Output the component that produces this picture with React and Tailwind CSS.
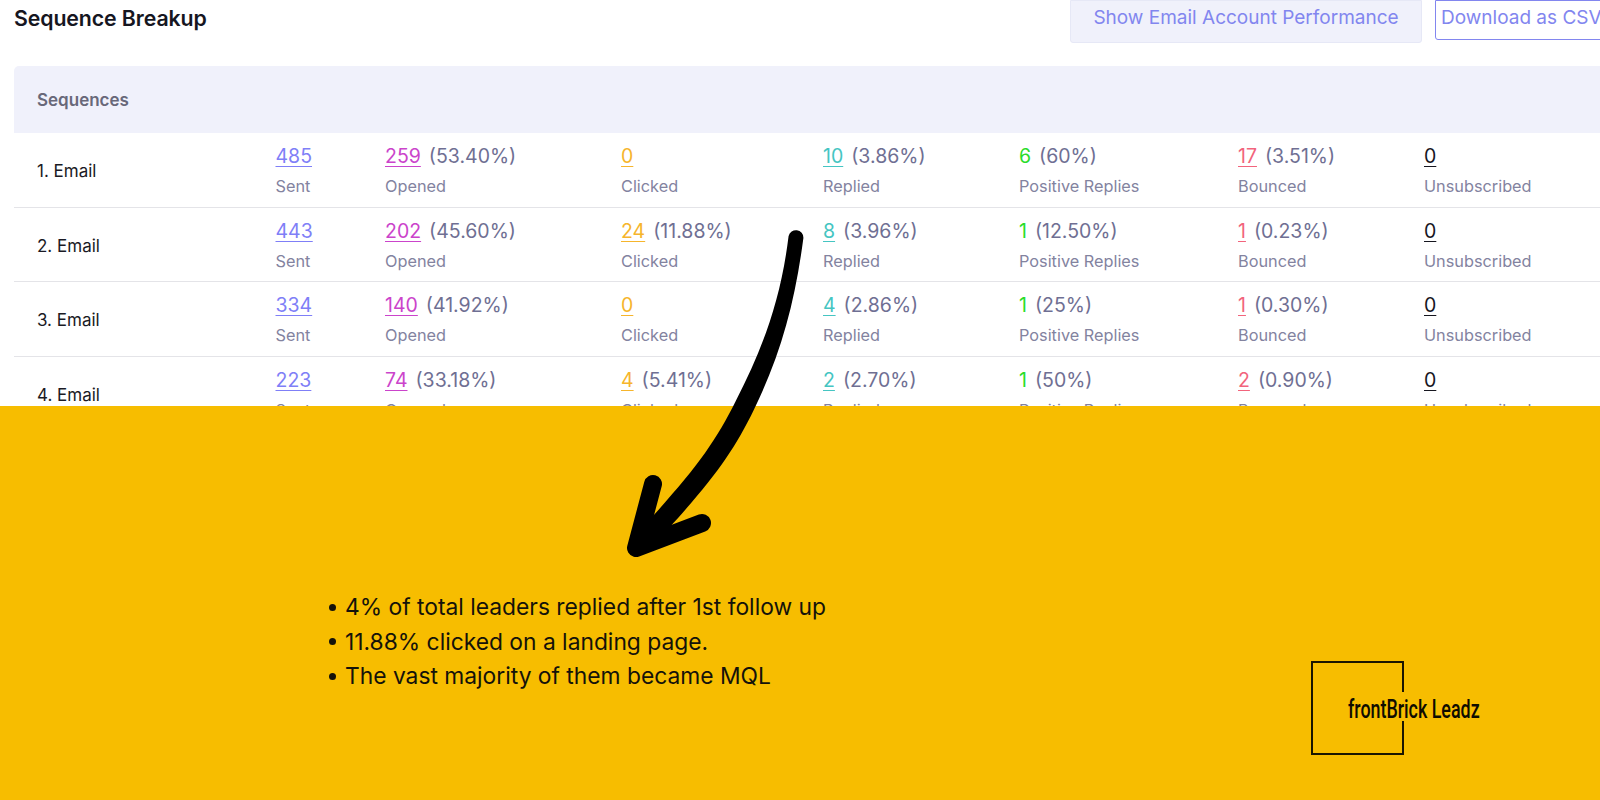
const rows = [
  { name: "1. Email", sent: "485", opened: "259", openedPct: "(53.40%)", clicked: "0", clickedPct: "", replied: "10", repliedPct: "(3.86%)", positive: "6", positivePct: "(60%)", bounced: "17", bouncedPct: "(3.51%)" },
  { name: "2. Email", sent: "443", opened: "202", openedPct: "(45.60%)", clicked: "24", clickedPct: "(11.88%)", replied: "8", repliedPct: "(3.96%)", positive: "1", positivePct: "(12.50%)", bounced: "1", bouncedPct: "(0.23%)" },
  { name: "3. Email", sent: "334", opened: "140", openedPct: "(41.92%)", clicked: "0", clickedPct: "", replied: "4", repliedPct: "(2.86%)", positive: "1", positivePct: "(25%)", bounced: "1", bouncedPct: "(0.30%)" },
  { name: "4. Email", sent: "223", opened: "74", openedPct: "(33.18%)", clicked: "4", clickedPct: "(5.41%)", replied: "2", repliedPct: "(2.70%)", positive: "1", positivePct: "(50%)", bounced: "2", bouncedPct: "(0.90%)" },
];

const bullets = [
  "4% of total leaders replied after 1st follow up",
  "11.88% clicked on a landing page.",
  "The vast majority of them became MQL",
];

const Stat = ({ value, pct, label, color, plain }) => (
  <div className="flex flex-col">
    <div className="flex items-baseline gap-[8px] text-[19.5px] leading-[30px] whitespace-nowrap">
      <span className={`${color} ${plain ? "" : "underline underline-offset-[3px] decoration-1"}`}>{value}</span>
      {pct && <span className="text-[#6f6f93]">{pct}</span>}
    </div>
    <div className="text-[16.3px] leading-[30px] text-[#83839f] whitespace-nowrap">{label}</div>
  </div>
);

export default function App() {
  return (
    <div className="relative w-[1600px] h-[800px] overflow-hidden bg-white font-['Inter','Liberation_Sans',sans-serif]">
      <div className="h-[406px] overflow-hidden">
        <div className="flex justify-between pl-[14px] h-[66px]">
          <h2 className="text-[21.3px] font-semibold leading-[37px] text-[#16161f] tracking-[-0.1px]">Sequence Breakup</h2>
          <div className="flex items-start gap-[13px] w-[530px] shrink-0">
            <button className="h-[43px] w-[352px] shrink-0 rounded-b-[3px] bg-[#f0f1fb] border border-[#e6e8f6] pb-[6px] text-[19px] text-[#8286ef] whitespace-nowrap">
              Show Email Account Performance
            </button>
            <button className="h-[40px] w-[200px] shrink-0 rounded-bl-[3px] border-[1.5px] border-[#8286ef] text-left pl-[5px] pb-[4px] text-[19px] text-[#8286ef] whitespace-nowrap">
              Download as CSV
            </button>
          </div>
        </div>
        <div className="ml-[14px]">
          <div className="h-[67px] rounded-tl-[5px] bg-[#f0f1fb] flex items-center pl-[23px] pt-[2px] text-[17px] font-semibold text-[#686879]">
            Sequences
          </div>
          {rows.map((r) => (
            <div
              key={r.name}
              className="h-[74.67px] shrink-0 grid grid-cols-[261.5px_109.5px_236px_202px_196px_219px_186px_1fr] pt-[8px] border-b-[1.5px] border-[#e4e4e8]"
            >
              <div className="pl-[23px] text-[17px] leading-[60px] text-[#1a1a24]">{r.name}</div>
              <Stat value={r.sent} label="Sent" color="text-[#7f7ff7]" />
              <Stat value={r.opened} pct={r.openedPct} label="Opened" color="text-[#cb44cb]" />
              <Stat value={r.clicked} pct={r.clickedPct} label="Clicked" color="text-[#f6b52c]" />
              <Stat value={r.replied} pct={r.repliedPct} label="Replied" color="text-[#45c5c2]" />
              <Stat value={r.positive} pct={r.positivePct} label="Positive Replies" color="text-[#2bdc2b]" plain />
              <Stat value={r.bounced} pct={r.bouncedPct} label="Bounced" color="text-[#f2647c]" />
              <Stat value="0" label="Unsubscribed" color="text-[#16161f]" />
            </div>
          ))}
        </div>
      </div>

      <div className="h-[394px] bg-[#f7bd00] flex justify-between">
        <ul className="mt-[184px] ml-[329px] flex flex-col text-[22.8px] leading-[34.5px] text-[#14120a] font-['Inter','Liberation_Sans',sans-serif] oldstyle-nums">
          {bullets.map((b) => (
            <li key={b} className="flex items-center gap-[9px] whitespace-nowrap">
              <span className="w-[7px] h-[7px] rounded-full bg-[#14120a] shrink-0" />
              {b}
            </li>
          ))}
        </ul>
        <div className="relative mt-[255px] mr-[196px] w-[93px] h-[94px] border-2 border-[#1a1500]">
          <div className="absolute left-[80px] top-[29px] h-[29px] w-[14px] bg-[#f7bd00]" />
          <span className="absolute left-[35px] top-[33px] origin-left scale-x-[0.715] text-[25px] leading-[28px] font-medium text-[#0f0c00] whitespace-nowrap font-['Roboto','Liberation_Sans',sans-serif]">
            frontBrick Leadz
          </span>
        </div>
      </div>

      <svg className="absolute left-0 top-0 pointer-events-none" width="1600" height="800" viewBox="0 0 1600 800">
        <path
          d="M788.6 236 C781 298 764 346 736 400.6 C713 447 692 474 632.7 538.2 L647.3 551.8 C708 486 731 457 754 409.4 C781 354 795 302 803.4 238 A7.5 7.5 0 0 0 788.6 236 Z"
          fill="#000"
        />
        <path
          d="M653 484 L636 548 L702 523"
          fill="none"
          stroke="#000"
          strokeWidth="18"
          strokeLinecap="round"
          strokeLinejoin="round"
        />
      </svg>
    </div>
  );
}
